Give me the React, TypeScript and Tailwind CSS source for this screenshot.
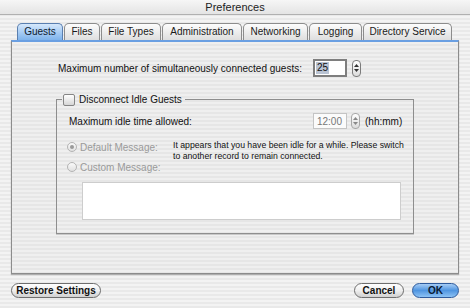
import React from 'react';

const stripes =
  'bg-[repeating-linear-gradient(180deg,#f3f3f3_0px,#f3f3f3_2px,#e9e9e9_2px,#e9e9e9_4px)]';
const paneStripes =
  'bg-[repeating-linear-gradient(180deg,#efefef_0px,#efefef_2px,#e6e6e6_2px,#e6e6e6_4px)]';

const tabs = [
  { label: 'Guests', w: 'w-[46px]' },
  { label: 'Files', w: 'w-[36px]' },
  { label: 'File Types', w: 'w-[60px]' },
  { label: 'Administration', w: 'w-[80px]' },
  { label: 'Networking', w: 'w-[65px]' },
  { label: 'Logging', w: 'w-[53px]' },
  { label: 'Directory Service', w: 'w-[89px]' },
];

function Stepper({ h, disabled }: { h: string; disabled?: boolean }) {
  return (
    <div
      className={`${h} w-[9px] rounded-[4px] border ${
        disabled ? 'border-[#a8a8a8]' : 'border-[#7c7c7c]'
      } bg-gradient-to-b from-white to-[#dcdcdc] flex flex-col items-center justify-center gap-[2px]`}
    >
      <svg width="5" height="3" viewBox="0 0 5 3">
        <path d="M2.5 0L5 3H0z" fill={disabled ? '#888' : '#333'} />
      </svg>
      <svg width="5" height="3" viewBox="0 0 5 3">
        <path d="M0 0h5L2.5 3z" fill={disabled ? '#888' : '#333'} />
      </svg>
    </div>
  );
}

function Radio({ checked }: { checked?: boolean }) {
  return (
    <div className="w-[10px] h-[10px] rounded-full border border-[#b4b4b4] bg-gradient-to-b from-[#fafafa] to-[#e0e0e0] flex items-center justify-center">
      {checked && <div className="w-[4px] h-[4px] rounded-full bg-[#9a9a9a]" />}
    </div>
  );
}

export default function App() {
  return (
    <div
      className={`w-[470px] h-[308px] overflow-hidden ${stripes} text-[10px] text-[#111] font-['Liberation_Sans',Arial,sans-serif] flex flex-col`}
    >
      <div className="h-[15px] border-b border-[#b0b0b0] bg-gradient-to-b from-[#f6f6f6] to-[#e4e4e4] flex items-center justify-center text-[11px] text-[#222] leading-none">
        Preferences
      </div>

      <div className="px-[11px]">
        <div className="flex gap-[1px] pl-[6px] mt-[8px] h-[17px] items-end">
          {tabs.map((t, i) => (
            <div
              key={t.label}
              className={`${t.w} h-[17px] rounded-t-[5px] border border-b-0 flex items-center justify-center leading-none ${
                i === 0
                  ? 'border-[#5a7fb0] bg-gradient-to-b from-[#d6e8fb] via-[#a9cdf4] to-[#7eb3ec] text-[#0c1a30]'
                  : 'border-[#8c8c8c] bg-gradient-to-b from-[#fdfdfd] to-[#dedede] text-[#1a1a1a]'
              }`}
            >
              {t.label}
            </div>
          ))}
        </div>

        <div
          className={`h-[234px] border border-[#8c8c8c] border-t-2 border-t-[#6a9fe2] ${paneStripes} shadow-[0_1px_1px_rgba(0,0,0,0.25)]`}
        >
          <div className="flex items-center mt-[17px] h-[18px]">
            <div className="w-[301px] text-right pr-[11px]">
              Maximum number of simultaneously connected guests:
            </div>
            <div className="w-[34px] h-[18px] border-2 border-[#7e7e7e] bg-white flex items-center pl-[1px]">
              <span className="bg-[#b9c3d3] px-[1px] leading-[12px]">25</span>
            </div>
            <div className="ml-[5px]">
              <Stepper h="h-[17px]" />
            </div>
          </div>

          <fieldset className="ml-[44px] w-[358px] mt-[16px] border border-[#8e8e8e] shadow-[0_1px_0_#c8c8c8]">
            <legend className="ml-[5px] px-[1px] flex items-center gap-[4px] h-[13px]">
              <div className="w-[12px] h-[12px] rounded-[2px] border border-[#858585] bg-gradient-to-b from-white to-[#d6d6d6]" />
              <span className="pr-[2px]">Disconnect Idle Guests</span>
            </legend>

            <div className="flex items-center mt-[7px] h-[16px] pl-[12px]">
              <div className="w-[244px]">Maximum idle time allowed:</div>
              <div className="w-[34px] h-[16px] border border-[#c4c4c4] bg-[#fbfbfb] flex items-center justify-end pr-[4px] text-[#777]">
                12:00
              </div>
              <div className="ml-[4px]">
                <Stepper h="h-[16px]" disabled />
              </div>
              <span className="ml-[5px]">(hh:mm)</span>
            </div>

            <div className="flex mt-[12px] pl-[10px]">
              <div className="w-[106px] flex flex-col text-[#9a9a9a]">
                <div className="flex items-center gap-[3px] h-[12px]">
                  <Radio checked />
                  <span>Default Message:</span>
                </div>
                <div className="flex items-center gap-[3px] h-[12px] mt-[8px]">
                  <Radio />
                  <span>Custom Message:</span>
                </div>
              </div>
              <div className="w-[238px] text-[8.7px] leading-[11px] -mt-[1px]">
                It appears that you have been idle for a while. Please switch to another record to
                remain connected.
              </div>
            </div>

            <div className="ml-[25px] w-[319px] h-[38px] mt-[9px] mb-[13px] border border-[#cdcdcd] bg-white" />
          </fieldset>
        </div>

        <div className="flex items-center mt-[9px] h-[15px] font-bold">
          <div className="w-[90px] h-[15px] rounded-full border border-[#6e6e6e] bg-gradient-to-b from-white via-[#efefef] to-[#d0d0d0] flex items-center justify-center leading-none">
            Restore Settings
          </div>
          <div className="ml-auto w-[50px] h-[15px] rounded-full border border-[#6e6e6e] bg-gradient-to-b from-white via-[#efefef] to-[#d0d0d0] flex items-center justify-center leading-none">
            Cancel
          </div>
          <div className="ml-[8px] w-[47px] h-[15px] rounded-full border border-[#2d5a9c] bg-gradient-to-b from-[#a6cdf5] via-[#4f95e0] to-[#8cc2f4] flex items-center justify-center leading-none text-[#0a1a33]">
            OK
          </div>
        </div>
      </div>
    </div>
  );
}
